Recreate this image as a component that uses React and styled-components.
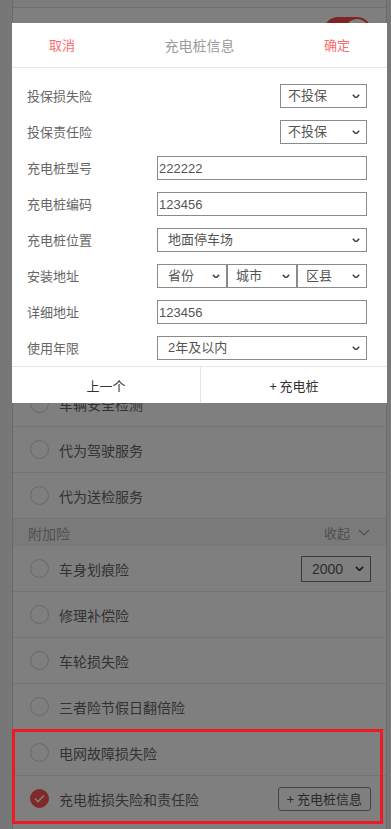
import React from "react";
import styled, { createGlobalStyle } from "styled-components";

const GlobalStyle = createGlobalStyle`
  html, body {
    margin: 0;
    padding: 0;
    background: #eeeeee;
    font-family: "Noto Sans CJK SC", "Noto Sans", sans-serif;
  }
  * { box-sizing: border-box; }
`;

const Page = styled.div`
  width: 375px;
  margin-left: 12px;
  background: #fff;
  border-left: 1px solid #d6d6d6;
  border-right: 1px solid #d6d6d6;
  min-height: 829px;
`;

const TopStrip = styled.div`
  height: 8px;
  border-bottom: 1px solid #e0e0e0;
  background: #f8f8f8;
`;

const Row = styled.div`
  display: flex;
  align-items: center;
  justify-content: ${({ end }) => (end ? "flex-end" : "flex-start")};
  height: ${({ tall }) => (tall ? "70px" : "46px")};
  padding: 0 15px 0 17px;
  border-bottom: 1px solid #e8e8e8;
  font-size: 14px;
  color: #666;
`;

const RowLabel = styled.span`
  flex: 1;
  margin-left: 10px;
  line-height: 20px;
`;

const Radio = styled.span`
  width: 19px;
  height: 19px;
  border-radius: 50%;
  border: 1px solid ${({ checked }) => (checked ? "#ff5252" : "#d2d2d2")};
  background: ${({ checked }) => (checked ? "#ff5252" : "#fff")};
  display: flex;
  align-items: center;
  justify-content: center;
  flex-shrink: 0;
`;

const SectionHead = styled.div`
  display: flex;
  align-items: center;
  justify-content: space-between;
  height: 27px;
  padding: 0 16px 0 15px;
  background: #f5f5f5;
  font-size: 14px;
  line-height: 20px;
  color: #a0a0a0;
`;

const Fold = styled.span`
  display: flex;
  align-items: center;
  gap: 8px;
  font-size: 13px;
`;

const Toggle = styled.span`
  width: 47px;
  height: 28px;
  border-radius: 14px;
  background: #ff4848;
  position: relative;
  &::after {
    content: "";
    position: absolute;
    right: 2px;
    top: 2px;
    width: 24px;
    height: 24px;
    border-radius: 50%;
    background: #fff;
  }
`;

const SmallSelect = styled.div`
  width: 70px;
  height: 26px;
  border: 1px solid #777;
  display: flex;
  align-items: center;
  justify-content: space-between;
  padding: 0 6px 0 10px;
  font-size: 14px;
  color: #5a5a5a;
  font-family: "Liberation Sans", "Noto Sans CJK SC", sans-serif;
`;

const InfoButton = styled.span`
  height: 24px;
  padding: 0 8px;
  border: 1px solid #888;
  border-radius: 3px;
  font-size: 13px;
  line-height: 18px;
  color: #555;
  display: flex;
  align-items: center;
`;

const Highlight = styled.div`
  position: relative;
  &::after {
    content: "";
    position: absolute;
    left: -1px;
    right: 3px;
    top: -1px;
    bottom: -2px;
    border: 3px solid #ec1c24;
    z-index: 30;
    pointer-events: none;
  }
`;

const Overlay = styled.div`
  position: fixed;
  inset: 0;
  background: rgba(0, 0, 0, 0.5);
  z-index: 10;
`;

const Modal = styled.div`
  position: fixed;
  left: 12px;
  top: 23px;
  width: 375px;
  background: #fff;
  z-index: 20;
`;

const ModalHead = styled.div`
  display: grid;
  grid-template-columns: 100px 1fr 100px;
  align-items: center;
  height: 45px;
  border-bottom: 1px solid #e5e5e5;
  text-align: center;
  line-height: 20px;
`;

const HeadAction = styled.span`
  font-size: 13px;
  color: #f86c6c;
`;

const HeadTitle = styled.span`
  font-size: 14px;
  color: #9a9a9a;
`;

const ModalBody = styled.div`
  padding: 10px 20px 0 15px;
`;

const FormRow = styled.div`
  display: flex;
  align-items: center;
  justify-content: space-between;
  height: 36px;
`;

const FormLabel = styled.span`
  width: 130px;
  font-size: 13px;
  line-height: 18px;
  color: #666;
`;

const Control = styled.div`
  height: 24px;
  width: ${({ w }) => w || "210px"};
  border: 1px solid #8a8a8a;
  display: flex;
  align-items: center;
  justify-content: space-between;
  padding: 0 6px 0 ${({ pad }) => pad || "10px"};
  font-size: 13px;
  line-height: 18px;
  color: #555;
  background: #fff;
  font-family: "Liberation Sans", "Noto Sans CJK SC", sans-serif;
`;

const TextInput = styled.input`
  height: 24px;
  width: 210px;
  border: 1px solid #8a8a8a;
  padding: 0 1px;
  font-size: 13px;
  color: #555;
  outline: none;
  font-family: "Liberation Sans", "Noto Sans CJK SC", sans-serif;
`;

const AddressGroup = styled.div`
  display: grid;
  grid-template-columns: 70px 70px 70px;
  width: 210px;
`;

const ModalFoot = styled.div`
  display: grid;
  grid-template-columns: 188px 1fr;
  height: 37px;
  border-top: 1px solid #e5e5e5;
`;

const FootButton = styled.span`
  display: flex;
  align-items: center;
  justify-content: center;
  font-size: 13px;
  color: #333;
  border-left: ${({ divided }) => (divided ? "1px solid #e5e5e5" : "none")};
`;

const Chevron = ({ size = 8 }) => (
  <svg width={size} height={size * 0.6} viewBox="0 0 10 6">
    <path d="M1 1 L5 5 L9 1" fill="none" stroke="#444" strokeWidth="2" />
  </svg>
);

const ThinChevron = () => (
  <svg width="12" height="7" viewBox="0 0 12 7">
    <path d="M1 1 L6 6 L11 1" fill="none" stroke="#a0a0a0" strokeWidth="1.2" />
  </svg>
);

const Check = () => (
  <svg width="11" height="9" viewBox="0 0 11 9">
    <path d="M1 4.5 L4 7.5 L10 1.5" fill="none" stroke="#fff" strokeWidth="1.6" />
  </svg>
);

const Select = ({ children, ...rest }) => (
  <Control {...rest}>
    <span>{children}</span>
    <Chevron />
  </Control>
);

// rows that sit fully behind the modal
const hiddenRows = [1, 2, 3, 4, 5];

export default function App() {
  return (
    <>
      <GlobalStyle />
      <Page>
        <TopStrip />
        <Row end>
          <Toggle />
        </Row>
        <SectionHead />
        <Row tall>
          <Radio />
        </Row>
        {hiddenRows.map((k) => (
          <Row key={k}>
            <Radio />
          </Row>
        ))}
        <Row>
          <Radio />
          <RowLabel>车辆安全检测</RowLabel>
        </Row>
        <Row>
          <Radio />
          <RowLabel>代为驾驶服务</RowLabel>
        </Row>
        <Row>
          <Radio />
          <RowLabel>代为送检服务</RowLabel>
        </Row>
        <SectionHead>
          附加险
          <Fold>
            收起
            <ThinChevron />
          </Fold>
        </SectionHead>
        <Row>
          <Radio />
          <RowLabel>车身划痕险</RowLabel>
          <SmallSelect>
            <span>2000</span>
            <Chevron size={9} />
          </SmallSelect>
        </Row>
        <Row>
          <Radio />
          <RowLabel>修理补偿险</RowLabel>
        </Row>
        <Row>
          <Radio />
          <RowLabel>车轮损失险</RowLabel>
        </Row>
        <Row>
          <Radio />
          <RowLabel>三者险节假日翻倍险</RowLabel>
        </Row>
        <Highlight>
          <Row>
            <Radio />
            <RowLabel>电网故障损失险</RowLabel>
          </Row>
          <Row>
            <Radio checked>
              <Check />
            </Radio>
            <RowLabel>充电桩损失险和责任险</RowLabel>
            <InfoButton>+ 充电桩信息</InfoButton>
          </Row>
        </Highlight>
      </Page>

      <Overlay />
      <Modal>
        <ModalHead>
          <HeadAction>取消</HeadAction>
          <HeadTitle>充电桩信息</HeadTitle>
          <HeadAction>确定</HeadAction>
        </ModalHead>
        <ModalBody>
          <FormRow>
            <FormLabel>投保损失险</FormLabel>
            <Select w="87px" pad="7px">不投保</Select>
          </FormRow>
          <FormRow>
            <FormLabel>投保责任险</FormLabel>
            <Select w="87px" pad="7px">不投保</Select>
          </FormRow>
          <FormRow>
            <FormLabel>充电桩型号</FormLabel>
            <TextInput defaultValue="222222" />
          </FormRow>
          <FormRow>
            <FormLabel>充电桩编码</FormLabel>
            <TextInput defaultValue="123456" />
          </FormRow>
          <FormRow>
            <FormLabel>充电桩位置</FormLabel>
            <Select>地面停车场</Select>
          </FormRow>
          <FormRow>
            <FormLabel>安装地址</FormLabel>
            <AddressGroup>
              <Select w="70px">省份</Select>
              <Select w="70px" pad="8px">城市</Select>
              <Select w="70px" pad="8px">区县</Select>
            </AddressGroup>
          </FormRow>
          <FormRow>
            <FormLabel>详细地址</FormLabel>
            <TextInput defaultValue="123456" />
          </FormRow>
          <FormRow>
            <FormLabel>使用年限</FormLabel>
            <Select>2年及以内</Select>
          </FormRow>
        </ModalBody>
        <ModalFoot>
          <FootButton>上一个</FootButton>
          <FootButton divided>+ 充电桩</FootButton>
        </ModalFoot>
      </Modal>
    </>
  );
}
